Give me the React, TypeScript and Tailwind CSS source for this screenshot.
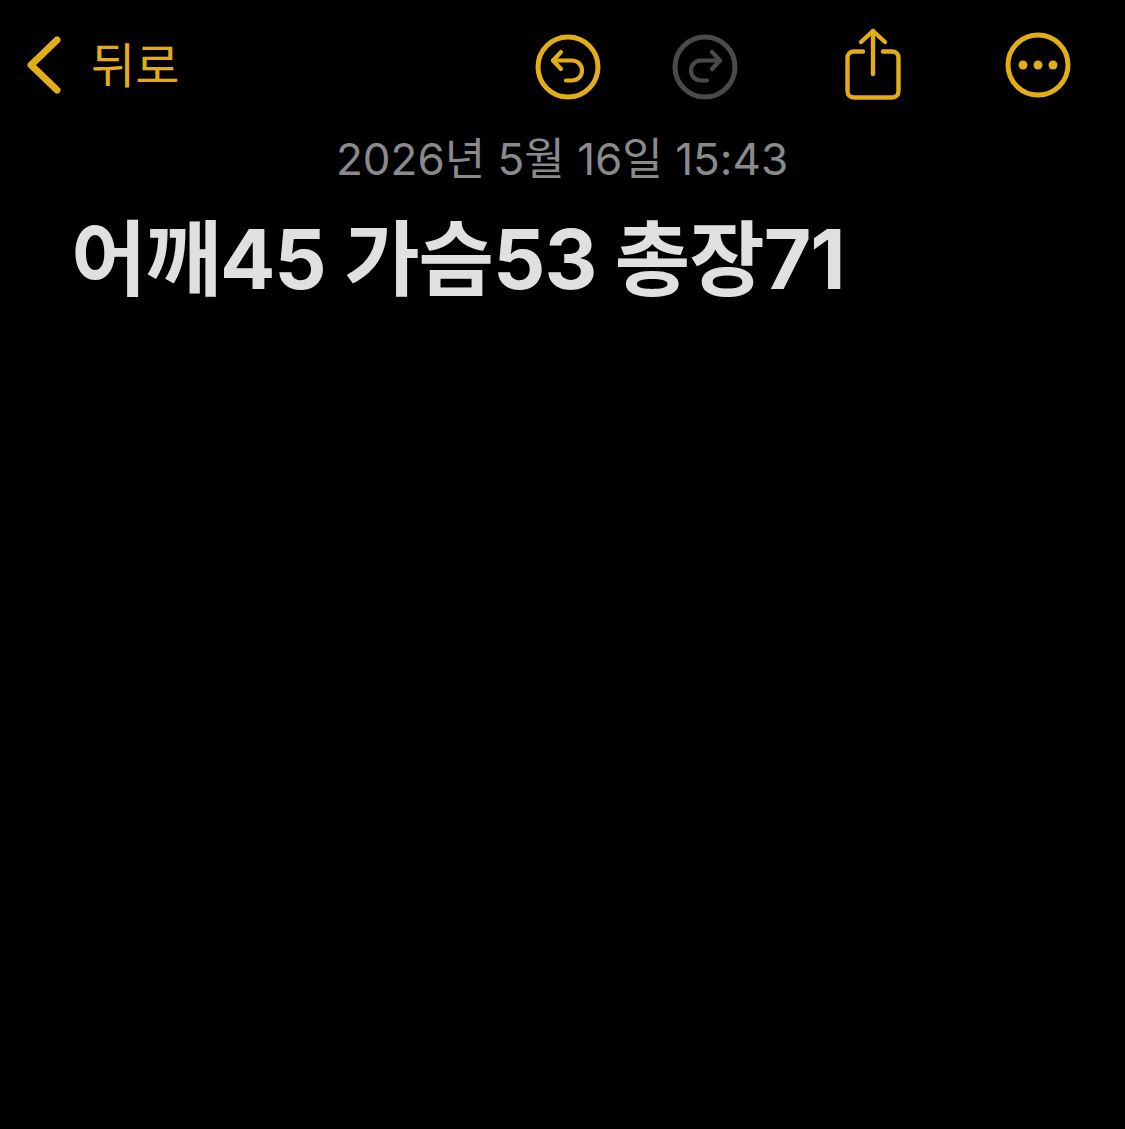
function Chevron() {
  return (
    <svg width="36" height="58" viewBox="0 0 36 58" fill="none" stroke="#e3ad17" strokeWidth="7" strokeLinecap="round" strokeLinejoin="round">
      <path d="M31 4 L5 29 L31 54" />
    </svg>
  )
}

function UndoIcon() {
  return (
    <svg width="66" height="66" viewBox="0 0 66 66" fill="none" stroke="#e3ad17" strokeLinecap="round" strokeLinejoin="round">
      <circle cx="33" cy="33" r="30" strokeWidth="5" />
      <path strokeWidth="4.2" d="M26 18 L18 26.5 L26 35" />
      <path strokeWidth="4.2" d="M18 26.5 H37 C43 26.5 47 31 47 36.5 C47 42 43 46.5 37 46.5 H31" />
    </svg>
  )
}

function RedoIcon() {
  return (
    <svg width="66" height="66" viewBox="0 0 66 66" fill="none" stroke="#4a4a4a" strokeLinecap="round" strokeLinejoin="round">
      <circle cx="33" cy="33" r="30" strokeWidth="5" />
      <path strokeWidth="4.2" d="M40 18 L48 26.5 L40 35" />
      <path strokeWidth="4.2" d="M48 26.5 H29 C23 26.5 19 31 19 36.5 C19 42 23 46.5 29 46.5 H35" />
    </svg>
  )
}

function ShareIcon() {
  return (
    <svg width="58" height="74" viewBox="0 0 58 74" fill="none" stroke="#e3ad17" strokeWidth="4.4" strokeLinecap="round" strokeLinejoin="round">
      <path d="M28 3 V46" />
      <path d="M16 14 L28 3 L40 14" />
      <path d="M18 23.5 H9 C5 23.5 2.5 26 2.5 30 V63 C2.5 67 5 69.5 9 69.5 H47 C51 69.5 53.5 67 53.5 63 V30 C53.5 26 51 23.5 47 23.5 H38" />
    </svg>
  )
}

function MoreIcon() {
  return (
    <svg width="66" height="66" viewBox="0 0 66 66" fill="none">
      <circle cx="33" cy="33" r="30" stroke="#e3ad17" strokeWidth="5" />
      <circle cx="18" cy="33" r="4.5" fill="#e3ad17" />
      <circle cx="33" cy="33" r="4.5" fill="#e3ad17" />
      <circle cx="48" cy="33" r="4.5" fill="#e3ad17" />
    </svg>
  )
}

export default function App() {
  return (
    <div className="w-[1125px] h-[1129px] bg-black overflow-hidden font-['Inter','Noto_Sans_CJK_KR',sans-serif]">
      {/* toolbar */}
      <div className="flex items-center h-[74px] mt-[28px] pl-[26px]">
        <Chevron />
        <span className="w-[86px] ml-[29px] text-[48px] leading-none text-[#e3ad17] mt-[1px] whitespace-nowrap">뒤로</span>
        <div className="ml-[358px] mt-[4px]"><UndoIcon /></div>
        <div className="ml-[71px] mt-[4px]"><RedoIcon /></div>
        <div className="ml-[107px]"><ShareIcon /></div>
        <div className="ml-[102px]"><MoreIcon /></div>
      </div>
      {/* note */}
      <div className="mt-[30px] pl-[336px] text-[44px] leading-[54px] text-[#8a8a8d] whitespace-nowrap">2026년 5월 16일 15:43</div>
      <h1 className="mt-[26px] pl-[71px] text-[82px] leading-[96px] font-bold text-[#e0e0e0] tracking-[-1px] whitespace-nowrap">어깨45 가슴53 총장71</h1>
    </div>
  )
}
